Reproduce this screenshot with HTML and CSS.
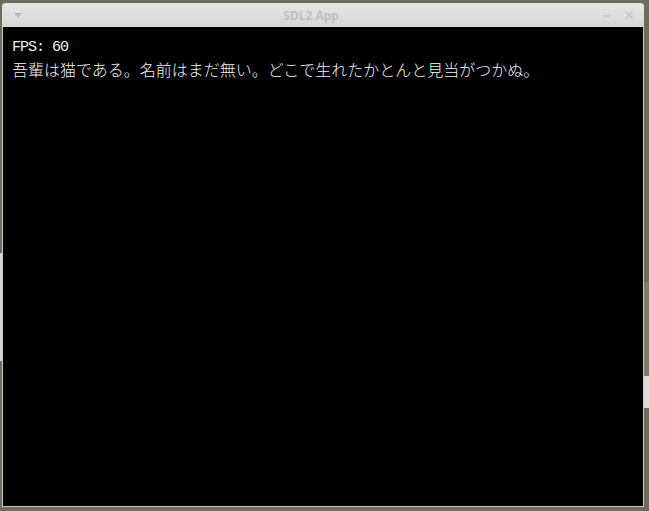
FILE: index.html
```html
<!DOCTYPE html>
<html>
<head>
<meta charset="utf-8">
<link rel="stylesheet" href="styles.css">
</head>
<body>
<div class="desk-win desk-win-left"></div>
<div class="desk-win desk-win-right-a"></div>
<div class="desk-win desk-win-right-b"></div>
<div class="window">
  <div class="titlebar">
    <span class="menu-btn"><svg width="8" height="5" viewBox="0 0 8 5"><path d="M0 0 L8 0 L4 4.5 Z" fill="#b8b8b8"/></svg></span>
    <span class="title">SDL2 App</span>
    <span class="ctrls">
      <svg width="10" height="10" viewBox="0 0 10 10"><path d="M1 6 H9" stroke="#c4c4c4" stroke-width="1.4"/></svg>
      <svg width="10" height="10" viewBox="0 0 10 10"><path d="M1.5 1.5 L8.5 8.5 M8.5 1.5 L1.5 8.5" stroke="#c4c4c4" stroke-width="1.4"/></svg>
    </span>
  </div>
  <div class="canvas">
    <div class="line fps">FPS: 60</div>
    <div class="line jp">吾輩は猫である。名前はまだ無い。どこで生れたかとんと見当がつかぬ。</div>
  </div>
</div>
</body>
</html>
```
FILE: styles.css
```css
html, body {
  margin: 0;
  padding: 0;
}
body {
  background: #6b6d5f;
  width: 649px;
  height: 511px;
  overflow: hidden;
  position: relative;
}
.desk-win {
  position: absolute;
}
.desk-win-left {
  left: 0;
  top: 253px;
  width: 2px;
  height: 108px;
  background: #d6d6d2;
}
.desk-win-right-a {
  left: 644px;
  top: 282px;
  width: 5px;
  height: 94px;
  background: #7a7c6e;
}
.desk-win-right-b {
  left: 644px;
  top: 376px;
  width: 5px;
  height: 32px;
  background: #dcdcd8;
}
.window {
  position: absolute;
  left: 2px;
  top: 3px;
  width: 640px;
  height: 503px;
  border: 1px solid #c8c8c8;
  border-top: none;
  border-radius: 4px 4px 0 0;
  display: flex;
  flex-direction: column;
  background: #000;
}
.titlebar {
  height: 24px;
  flex: none;
  margin: 0 -1px;
  background: linear-gradient(#e6e6e6, #d6d6d6);
  border-radius: 4px 4px 0 0;
  display: flex;
  align-items: center;
  position: relative;
  font-family: "Open Sans", "DejaVu Sans", sans-serif;
}
.menu-btn {
  display: flex;
  padding-left: 12px;
  padding-top: 1px;
}
.title {
  position: absolute;
  left: 0;
  right: 24px;
  text-align: center;
  font-size: 12px;
  font-weight: bold;
  color: #c0c0c0;
  pointer-events: none;
}
.ctrls {
  margin-left: auto;
  display: flex;
  gap: 12px;
  padding-right: 10px;
}
.canvas {
  flex: 1;
  background: #000;
  padding: 12px 0 0 9px;
  color: #f2f2f2;
}
.line {
  white-space: nowrap;
}
.fps {
  font-family: "Liberation Mono", "DejaVu Sans Mono", monospace;
  font-size: 15px;
  letter-spacing: -1px;
  line-height: 18px;
}
.jp {
  font-family: "Noto Sans CJK JP", sans-serif;
  font-size: 16px;
  font-weight: 300;
  line-height: 20px;
  margin-top: 2px;
}
```
